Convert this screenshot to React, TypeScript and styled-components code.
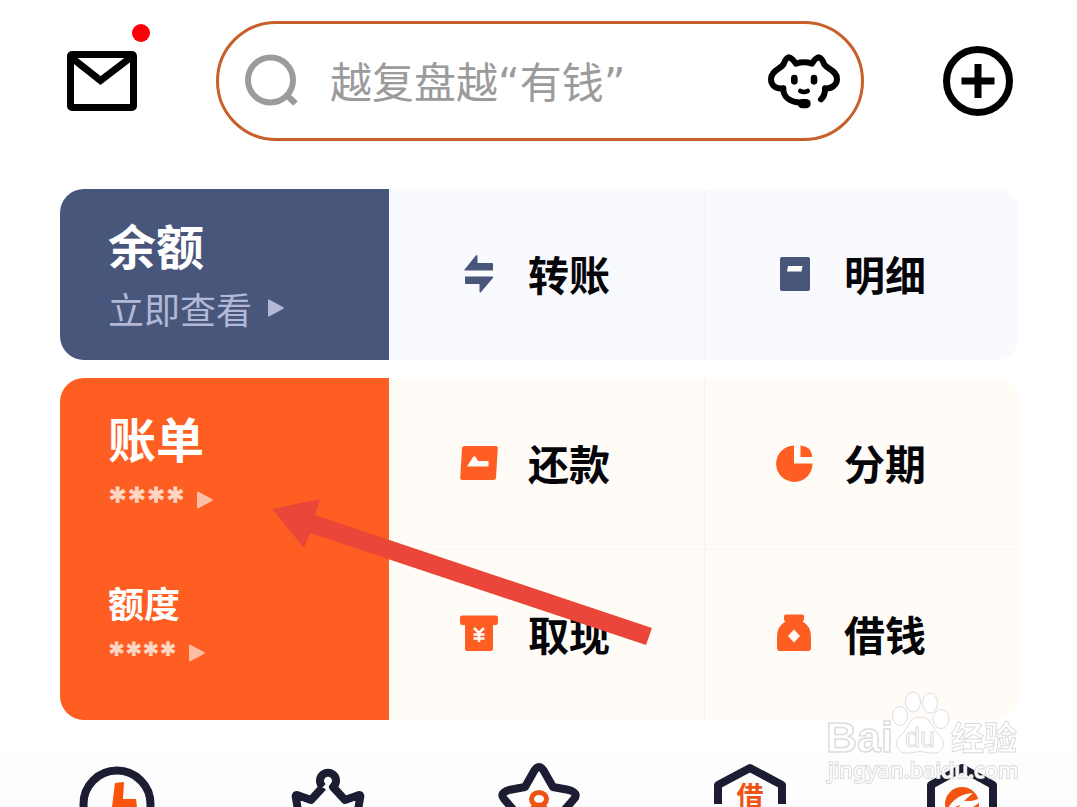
import React from "react";
import styled, { createGlobalStyle } from "styled-components";

const NAVY = "#48567c";
const ORANGE = "#fe5e22";
const INK = "#1c1c32";

const GlobalStyle = createGlobalStyle`
  *, *::before, *::after { box-sizing: border-box; }
  body {
    margin: 0;
    background: #ffffff;
    color: #06060a;
    font-family: "Noto Sans CJK SC", "Noto Sans", sans-serif;
  }
`;

const Page = styled.div`
  height: 100vh;
  overflow: hidden;
  display: flex;
  flex-direction: column;
`;

const Header = styled.header`
  display: flex;
  align-items: center;
  gap: 79px;
  padding: 21px 64px 0 67px;
`;

const IconButton = styled.button`
  position: relative;
  flex: none;
  display: flex;
  padding: 0;
  border: 0;
  background: none;
  color: #000000;
  cursor: pointer;
`;

const Badge = styled.span`
  position: absolute;
  top: -27px;
  right: -13px;
  width: 18px;
  height: 18px;
  border-radius: 50%;
  background: #fb0006;
`;

const SearchBar = styled.label`
  flex: 1;
  min-width: 0;
  height: 120px;
  display: flex;
  align-items: center;
  padding: 0 21px 0 26px;
  border: 3px solid #c8602b;
  border-radius: 60px;
`;

const SearchInput = styled.input`
  flex: 1;
  min-width: 0;
  height: 64px;
  margin-left: 32px;
  padding: 4px 0 0;
  border: 0;
  outline: none;
  background: none;
  color: #333333;
  font: 400 42px/60px "DejaVu Sans", "Noto Sans CJK SC", sans-serif;
  &::placeholder { color: #9b9b9b; opacity: 1; }
`;

const Cards = styled.main`
  display: flex;
  flex-direction: column;
  gap: 18px;
  padding: 48px 58px 32px 60px;
`;

const Card = styled.section<{ $tint: string }>`
  position: relative;
  display: grid;
  grid-template-columns: 329fr 315fr 315fr;
  grid-auto-rows: 171px;
  border-radius: 24px;
  background: ${(p) => p.$tint};
`;

const Summary = styled.div<{ $color: string; $rows: number }>`
  grid-row: span ${(p) => p.$rows};
  display: flex;
  flex-direction: column;
  padding: 25px 0 0 48px;
  border-radius: 24px 0 0 24px;
  background: ${(p) => p.$color};
  color: #ffffff;
`;

const Group = styled.div`
  height: 171px;
  flex: none;
  padding-top: 4px;
  & + & { height: auto; }
`;

const Title = styled.h2<{ $small?: boolean }>`
  margin: 0;
  font-size: ${(p) => (p.$small ? 36 : 48)}px;
  line-height: ${(p) => (p.$small ? 48 : 60)}px;
  font-weight: 700;
`;

const SubLink = styled.a<{ $color: string }>`
  display: flex;
  align-items: center;
  gap: 16px;
  width: max-content;
  height: 68px;
  color: ${(p) => p.$color};
  font-size: 36px;
  line-height: 48px;
  text-decoration: none;
`;

const MaskLink = styled.a<{ $small?: boolean }>`
  display: flex;
  align-items: flex-start;
  gap: 12px;
  width: max-content;
  padding-top: ${(p) => (p.$small ? 10 : 16)}px;
  color: #ffd6c4;
  font: 500 ${(p) => (p.$small ? 33 : 37)}px/36px Inter, sans-serif;
  -webkit-text-stroke: 1px currentColor;
  text-decoration: none;
  svg { margin-top: 8px; opacity: 0.8; }
`;

const Action = styled.button<{ $top?: boolean; $left?: boolean }>`
  display: flex;
  align-items: center;
  gap: 30px;
  min-width: 0;
  padding: 0 0 4px 71px;
  border: 0 solid #f5f3f5;
  border-left-width: ${(p) => (p.$left ? 1 : 0)}px;
  border-top-width: ${(p) => (p.$top ? 1 : 0)}px;
  background: none;
  color: inherit;
  font: inherit;
  font-size: 41px;
  line-height: 60px;
  font-weight: 700;
  white-space: nowrap;
  cursor: pointer;
  svg { margin-top: 2px; }
`;

const Pointer = styled.svg`
  position: absolute;
  left: 212px;
  top: 120px;
  pointer-events: none;
`;

const Nav = styled.nav`
  flex: 1;
  display: grid;
  grid-template-columns: repeat(5, 1fr);
  justify-items: center;
  padding: 13px 11px 0;
  background: #fdfdfd;
`;

const NavLink = styled.a`
  display: block;
  height: 80px;
  svg { display: block; overflow: visible; }
`;

const Watermark = styled.svg`
  position: fixed;
  right: 56px;
  bottom: 20px;
  pointer-events: none;
`;

const Play = () => (
  <svg width="16" height="18" viewBox="0 0 16 18" fill="currentColor" aria-hidden="true">
    <path d="M0 1.500Q0 0 1.500 .7L15 8q1.300 1 0 2L1.500 17.300Q0 18 0 16.500Z" />
  </svg>
);

const MailIcon = () => (
  <svg width="70" height="60" viewBox="0 0 70 60" fill="none" stroke="currentColor" strokeWidth="7">
    <rect x="3.500" y="3.500" width="63" height="53" rx="1.500" />
    <path d="M5 7 33.500 29.500 63 7" />
  </svg>
);

const SearchIcon = () => (
  <svg width="53" height="54" viewBox="0 0 53 54" fill="none" stroke="#9b9b9b" strokeWidth="6" aria-hidden="true">
    <circle cx="25.500" cy="26" r="22.500" />
    <path d="m42 41.500 8.500 8" strokeWidth="6.500" />
  </svg>
);

const AssistantIcon = () => (
  <svg width="72" height="55" viewBox="84 130 216 165" fill="none" stroke="currentColor" strokeWidth="18" strokeLinecap="round" strokeLinejoin="round">
    <path d="M184 276C148 274 129 258 130 233C102 237 93 219 93 205C93 180 123 175 131 160Q138 141 147 140Q156 142 168 159Q192 151 216 159Q227 141 237 140Q246 142 252 160C261 175 291 180 291 205C291 221 277 235 255 233Q256 254 243 266" />
    <path d="M163 202v10M222 202v10" strokeWidth="20" />
    <path d="M181 241q11 6 22 0" strokeWidth="14" />
    <path d="M187 279h11" strokeWidth="28" />
  </svg>
);

const PlusIcon = () => (
  <svg width="70" height="70" viewBox="0 0 70 70" fill="none" stroke="currentColor" strokeWidth="7">
    <circle cx="35" cy="35" r="31.500" />
    <path d="M35 18v34M18.500 35h33" />
  </svg>
);

const TransferIcon = () => (
  <svg width="38" height="40" viewBox="0 0 38 40" fill={NAVY} aria-hidden="true">
    <path d="M5 16.500Q3.500 16.500 5 15L15.500 2Q17.500 0 17.500 2.500V9H32q1 0 1 1v6.500ZM5 22.500H32q2 0 .5 2L21.500 37.500Q19.500 40 19.500 37v-7H6q-1 0-1-1Z" />
  </svg>
);

const DetailIcon = () => (
  <svg width="38" height="40" viewBox="0 0 38 40" aria-hidden="true">
    <rect x="4" y="3" width="30" height="34" rx="2" fill={NAVY} />
    <path d="M12 12h14.500l-1 5.500H11Z" fill="#fff" />
  </svg>
);

const RepayIcon = () => (
  <svg width="38" height="40" viewBox="0 0 38 40" aria-hidden="true">
    <path d="M5 3H35.500q2.500 0 2.300 2.500L36 34.500Q36 37 33 37H2.500Q0 37 .2 34.500L2 5.500Q2 3 5 3Z" fill={ORANGE} />
    <path d="M7 23.500 13 14Q14.500 12.500 16 14.500L18 18H28.500V23.500Z" fill="#fffaf5" />
  </svg>
);

const PieIcon = () => (
  <svg width="38" height="40" viewBox="0 0 38 40" fill={ORANGE} aria-hidden="true">
    <path d="M18 2.500V20.500H36.500A18.200 18.200 0 1 1 18 2.500ZM24.500 2.500Q35 3 36.500 14H24.500Z" />
  </svg>
);

const WithdrawIcon = () => (
  <svg width="38" height="40" viewBox="0 0 38 40" aria-hidden="true">
    <path d="M2 1.500H36q2 0 2 2V9q0 2-2 2H33V35q0 2-2 2H7q-2 0-2-2V11H2Q0 11 0 9V3.500q0-2 2-2Z" fill={ORANGE} />
    <path d="m14 14 5 5 5-5M19 18v10M13.500 20.500h11M13.500 24.500h11" fill="none" stroke="#fffaf5" strokeWidth="2.500" />
  </svg>
);

const PouchIcon = () => (
  <svg width="38" height="40" viewBox="0 0 38 40" aria-hidden="true">
    <path d="M10 .5H26q2 0 2 2V5q0 1.500-1.500 2.500Q35 12 35 23V34q0 3-3 3H4q-3 0-3-3V23Q1 12 9.500 7.500 8 6.500 8 5V2.500Q8 .5 10 .5Z" fill={ORANGE} />
    <path d="m18 15.500 6 6.500-6 6.500-6-6.500Z" fill="#fffaf5" />
  </svg>
);

const NavIcon = ({ children }: { children: React.ReactNode }) => (
  <svg width="80" height="80" viewBox="0 0 80 80" fill="none" stroke={INK} strokeWidth="8" strokeLinejoin="round" aria-hidden="true">
    {children}
  </svg>
);

const navItems = [
  {
    label: "最近",
    art: (
      <>
        <circle cx="40" cy="39" r="33.500" />
        <path d="M38 18 47 17 46 34 59 34 60 42H35Z" fill="#fb530b" stroke="none" />
      </>
    ),
  },
  {
    label: "会员",
    art: (
      <path d="M35 22A8 8 0 1 1 45 22L57 35 71 30Q73 30 72 33L67 64H13L8 33Q7 30 9 30L23 35 35 22" />
    ),
  },
  {
    label: "福利",
    art: (
      <>
        <path d="M34 8Q40-4 46 8L54 22 70 25Q80 28 75 34L62 49 65 67 40 60 15 67 18 49 5 34Q0 28 10 25L26 22Z" />
        <g stroke="#ee5314" strokeWidth="5">
          <ellipse cx="40" cy="34" rx="7.500" ry="6.500" />
          <circle cx="40" cy="48" r="8" />
        </g>
      </>
    ),
  },
  {
    label: "借款",
    art: (
      <>
        <path d="M8 39V20L40 3 72 20V39" />
        <text x="40" y="41" textAnchor="middle" fontSize="27" fontWeight="700" fill="#ee5314" stroke="none">借</text>
      </>
    ),
  },
  {
    label: "还款",
    art: (
      <>
        <path d="M10 60V20L41 3 72 20V60" />
        <circle cx="41" cy="39" r="17" fill="#f4520f" stroke="none" />
        <path d="M26 45Q34 29 52 28L43 36H50Q57 35 61 31Q57 44 44 43L34 50 39 40Z" fill="#fff" stroke="none" />
      </>
    ),
  },
];

const BaiduMark = () => (
  <Watermark width="196" height="96" viewBox="0 0 196 96" fill="#fff" stroke="#dcdcdc" strokeWidth="1" fontFamily="Liberation Sans, Arial, sans-serif">
    <text x="1" y="61" fontSize="43" fontWeight="700" strokeWidth="1.500">Bai</text>
    <ellipse cx="75" cy="25" rx="7.500" ry="9.500" />
    <ellipse cx="88" cy="11" rx="7.500" ry="10" />
    <ellipse cx="105" cy="12" rx="7.500" ry="10" />
    <ellipse cx="116" cy="28" rx="8" ry="9.500" />
    <path d="M95 26C83 26 83 39 76 44C68 50 71 63 83 62Q95 59 107 62C119 63 122 51 114 44C107 38 107 26 95 26Z" />
    <text x="80" y="56" fontSize="27">du</text>
    <text x="126" y="59" fontSize="33" fontWeight="700" fontFamily="Noto Sans CJK SC, sans-serif">经验</text>
    <text x="3" y="87" fontSize="22" fillOpacity="0.900" strokeWidth="2" paintOrder="stroke" fontFamily="Noto Sans, sans-serif">jingyan.baidu.com</text>
  </Watermark>
);

export default function App() {
  return (
    <Page>
      <GlobalStyle />
      <Header>
        <IconButton aria-label="消息">
          <MailIcon />
          <Badge />
        </IconButton>
        <SearchBar>
          <SearchIcon />
          <SearchInput type="text" aria-label="搜索" placeholder="越复盘越“有钱”" />
          <IconButton aria-label="客服">
            <AssistantIcon />
          </IconButton>
        </SearchBar>
        <IconButton aria-label="添加">
          <PlusIcon />
        </IconButton>
      </Header>

      <Cards>
        <Card $tint="#f9fafe">
          <Summary $color={NAVY} $rows={1}>
            <Title>余额</Title>
            <SubLink href="#balance" $color="#b3b8d6">立即查看<Play /></SubLink>
          </Summary>
          <Action><TransferIcon />转账</Action>
          <Action $left><DetailIcon />明细</Action>
        </Card>

        <Card $tint="#fffcf8">
          <Summary $color={ORANGE} $rows={2}>
            <Group>
              <Title>账单</Title>
              <MaskLink href="#bill">****<Play /></MaskLink>
            </Group>
            <Group>
              <Title $small>额度</Title>
              <MaskLink href="#limit" $small>****<Play /></MaskLink>
            </Group>
          </Summary>
          <Action><RepayIcon />还款</Action>
          <Action $left><PieIcon />分期</Action>
          <Action $top><WithdrawIcon />取现</Action>
          <Action $top $left><PouchIcon />借钱</Action>
          <Pointer width="380" height="150" viewBox="0 0 380 150" aria-hidden="true">
            <path d="M0 11 48 1 43 17 380 130 374 147 38 35 32 50Z" fill="#ea4639" />
          </Pointer>
        </Card>
      </Cards>

      <Nav>
        {navItems.map((item) => (
          <NavLink key={item.label} href="#nav" aria-label={item.label}>
            <NavIcon>{item.art}</NavIcon>
          </NavLink>
        ))}
      </Nav>
      <BaiduMark />
    </Page>
  );
}
